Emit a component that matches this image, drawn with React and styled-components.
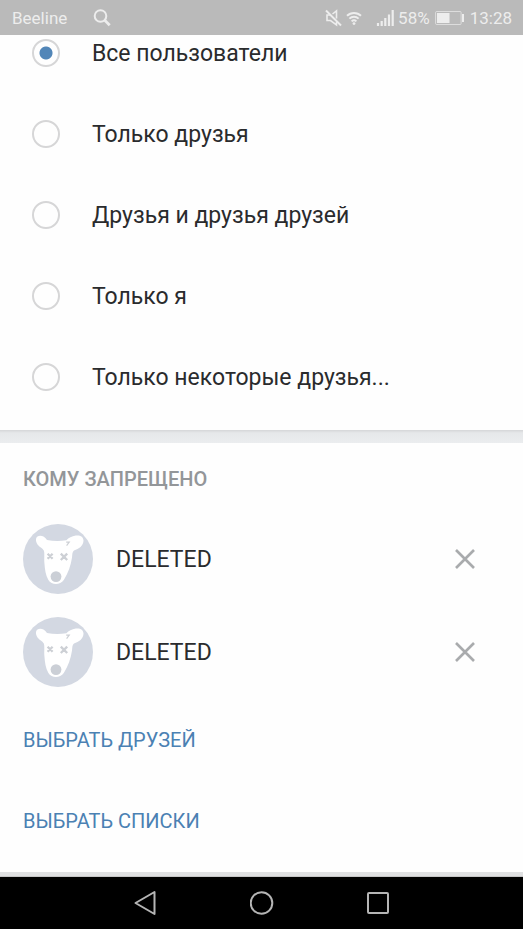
import React, { useState } from "react";
import styled, { createGlobalStyle } from "styled-components";

const GlobalStyle = createGlobalStyle`
  *, *::before, *::after { box-sizing: border-box; }
  body {
    margin: 0;
    background: #fefefe;
    color: #2a2b2d;
    font-family: Roboto, "Noto Sans", sans-serif;
  }
  button { font: inherit; padding: 0; border: 0; background: none; cursor: pointer; }
`;

const Screen = styled.div`
  display: flex;
  flex-direction: column;
  min-height: 100vh;
`;

const StatusBar = styled.header`
  display: flex;
  align-items: center;
  justify-content: space-between;
  height: 35px;
  padding: 0 11px 0 12px;
  background: #bababa;
  color: #ededed;
  font-size: 17px;
  line-height: 20px;
`;

const StatusGroup = styled.div`
  display: flex;
  align-items: center;
  gap: ${(p) => p.$gap}px;
`;

const Glyph = styled.svg`
  display: block;
  flex: none;
  fill: none;
  stroke: currentColor;
`;

const Main = styled.main`
  flex: 1;
  display: flex;
  flex-direction: column;
`;

const Options = styled.fieldset`
  display: flex;
  flex-direction: column;
  gap: 45px;
  margin: 0;
  padding: 0 32px 35px;
  border: 0;
`;

const Option = styled.label`
  display: flex;
  align-items: center;
  gap: 32px;
  height: 36px;
  cursor: pointer;
`;

const ItemText = styled.span`
  flex: 1;
  padding-top: 2px;
  font-size: 23px;
  line-height: 28px;
`;

const Radio = styled.input`
  appearance: none;
  flex: none;
  width: 28px;
  height: 28px;
  margin: 0;
  border: 2px solid #d6d6d7;
  border-radius: 50%;
  &:checked {
    background: radial-gradient(circle, #5286b8 6px, transparent 7px);
  }
`;

const Divider = styled.div`
  height: 13px;
  background: linear-gradient(#d5d6d8, #e6e8ea 3px, #ebedef);
`;

const Section = styled.section`
  flex: 1;
  display: flex;
  flex-direction: column;
  align-items: stretch;
  padding: 24px 23px 36px;
`;

const Heading = styled.h2`
  margin: 0 0 33px;
  color: #939699;
  font-size: 20px;
  font-weight: 500;
  line-height: 24px;
`;

const People = styled.ul`
  display: flex;
  flex-direction: column;
  gap: 23px;
  margin: 0 0 38px;
  padding: 0;
  list-style: none;
`;

const Person = styled.li`
  display: flex;
  align-items: center;
  gap: 23px;
  height: 70px;
`;

const RemoveButton = styled.button`
  display: grid;
  place-items: center;
  width: 70px;
  height: 70px;
  color: #a9abad;
`;

const Actions = styled.div`
  display: flex;
  flex-direction: column;
  align-items: flex-start;
  gap: 51px;
`;

const Action = styled.button`
  && {
    color: #4b81b3;
    font-size: 20px;
    line-height: 30px;
  }
`;

const BottomEdge = styled.div`
  height: 5px;
  background: #dfe0e1;
  border-bottom: 1px solid #c6c6c6;
`;

const NavBar = styled.nav`
  display: flex;
  align-items: center;
  justify-content: center;
  gap: 68px;
  height: 52px;
  background: #000;
`;

const NavButton = styled.button`
  display: grid;
  place-items: center;
  width: 48px;
  height: 48px;
  color: #b5b5b5;
`;

function SearchIcon() {
  return (
    <Glyph width="18" height="18" viewBox="0 0 18 18" strokeWidth="2" aria-hidden="true">
      <circle cx="7.5" cy="7" r="5.8" />
      <path d="M11.5 11L16.7 16.2" strokeWidth="2.8" />
    </Glyph>
  );
}

function MutedIcon() {
  return (
    <Glyph width="18" height="18" viewBox="0 0 18 18" strokeWidth="1.6" aria-hidden="true">
      <path d="M6 6H3v5.5h3.5l6 4.5v-3M8.5 5l4-3.2V9.5" />
      <path d="M2 1.5L17 16.5" strokeWidth="2" />
    </Glyph>
  );
}

function WifiIcon() {
  return (
    <Glyph width="16" height="16" viewBox="0 0 16 16" strokeWidth="1.9" aria-hidden="true">
      <path d="M1 5.8a10 10 0 0 1 14 0M3.4 8.7a6.5 6.5 0 0 1 9.2 0M5.6 11.4a3.5 3.5 0 0 1 4.8 0" />
      <circle cx="8" cy="13.6" r="1.4" fill="currentColor" stroke="none" />
    </Glyph>
  );
}

function SignalIcon() {
  return (
    <Glyph width="18" height="18" viewBox="0 0 18 18" strokeWidth="2.2" aria-hidden="true">
      <path d="M2 17v-3M5.7 17v-5M9.3 17V9M13 17V5.5M16.7 17V1" />
    </Glyph>
  );
}

function BatteryIcon() {
  return (
    <Glyph width="30" height="16" viewBox="0 0 30 16" aria-hidden="true">
      <rect x="0.6" y="1.5" width="25.5" height="13" rx="1" strokeOpacity="0.7" />
      <rect x="2" y="3" width="12.5" height="10" fill="currentColor" stroke="none" />
      <path d="M28 4v8" strokeWidth="2" />
    </Glyph>
  );
}

function DogAvatar() {
  return (
    <Glyph width="70" height="70" viewBox="0 0 70 70" aria-hidden="true">
      <circle cx="35" cy="35" r="35" fill="#d3d8e2" stroke="none" />
      <path
        d="M24 16C21.8 12.3 17.5 10.8 14.5 12.4C12 14 12.8 18.5 15.2 21.2C17 23.4 19.6 24.2 20.8 26.4C21.8 29 21 34 21.4 39C21.9 45.5 22.6 51.5 25.4 56C28.4 61.2 37 61.5 40.8 56C45 49.5 48 41 49 33.5C49.4 30.2 49.2 27.6 51 26.4C55.8 25.4 60.5 21.6 60.5 16.6C60.4 12.8 57.2 11 52.8 11.6C48.8 12.2 45.6 13.8 43.4 16.3Q33 17.6 24 16Z"
        fill="#fff"
        stroke="none"
      />
      <circle cx="33" cy="52.6" r="5.4" fill="#cbcfd6" stroke="none" />
      <path d="M24.6 29.8l5 5m0-5l-5 5M37.8 29.6l6.4 6.4m0-6.4l-6.4 6.4" stroke="#cdd0d5" strokeWidth="2.3" />
      <path d="M43.2 18.2h3l-2.6 3.4" stroke="#cdd0d5" strokeWidth="1.2" />
    </Glyph>
  );
}

function CloseIcon() {
  return (
    <Glyph width="20" height="20" viewBox="0 0 20 20" strokeWidth="2.6" aria-hidden="true">
      <path d="M1 1l18 18M19 1L1 19" />
    </Glyph>
  );
}

function BackIcon() {
  return (
    <Glyph width="24" height="26" viewBox="0 0 24 26" strokeWidth="2" strokeLinejoin="round" aria-hidden="true">
      <path d="M20.5 2v22L1.5 13z" />
    </Glyph>
  );
}

function HomeIcon() {
  return (
    <Glyph width="24" height="24" viewBox="0 0 24 24" strokeWidth="2" aria-hidden="true">
      <circle cx="11.5" cy="12" r="10.8" />
    </Glyph>
  );
}

function RecentIcon() {
  return (
    <Glyph width="22" height="22" viewBox="0 0 22 22" strokeWidth="2" aria-hidden="true">
      <rect x="1" y="1" width="20" height="20" rx="1" />
    </Glyph>
  );
}

const OPTIONS = [
  "Все пользователи",
  "Только друзья",
  "Друзья и друзья друзей",
  "Только я",
  "Только некоторые друзья...",
];

export default function App() {
  const [selected, setSelected] = useState(OPTIONS[0]);
  const [people, setPeople] = useState([
    { id: 1, name: "DELETED" },
    { id: 2, name: "DELETED" },
  ]);

  return (
    <Screen>
      <GlobalStyle />
      <StatusBar>
        <StatusGroup $gap={26}>
          <span>Beeline</span>
          <SearchIcon />
        </StatusGroup>
        <StatusGroup $gap={5}>
          <StatusGroup $gap={14}>
            <StatusGroup $gap={4}>
              <MutedIcon />
              <WifiIcon />
            </StatusGroup>
            <StatusGroup $gap={4}>
              <SignalIcon />
              <span>58%</span>
            </StatusGroup>
          </StatusGroup>
          <BatteryIcon />
          <span>13:28</span>
        </StatusGroup>
      </StatusBar>
      <Main>
        <Options>
          {OPTIONS.map((option) => (
            <Option key={option}>
              <Radio
                type="radio"
                name="audience"
                checked={selected === option}
                onChange={() => setSelected(option)}
              />
              <ItemText>{option}</ItemText>
            </Option>
          ))}
        </Options>
        <Divider />
        <Section>
          <Heading>КОМУ ЗАПРЕЩЕНО</Heading>
          <People>
            {people.map((person) => (
              <Person key={person.id}>
                <DogAvatar />
                <ItemText>{person.name}</ItemText>
                <RemoveButton
                  type="button"
                  aria-label="Удалить"
                  onClick={() => setPeople(people.filter((p) => p.id !== person.id))}
                >
                  <CloseIcon />
                </RemoveButton>
              </Person>
            ))}
          </People>
          <Actions>
            <Action type="button">ВЫБРАТЬ ДРУЗЕЙ</Action>
            <Action type="button">ВЫБРАТЬ СПИСКИ</Action>
          </Actions>
        </Section>
        <BottomEdge />
      </Main>
      <NavBar>
        <NavButton type="button" aria-label="Назад"><BackIcon /></NavButton>
        <NavButton type="button" aria-label="Домой"><HomeIcon /></NavButton>
        <NavButton type="button" aria-label="Недавние"><RecentIcon /></NavButton>
      </NavBar>
    </Screen>
  );
}
